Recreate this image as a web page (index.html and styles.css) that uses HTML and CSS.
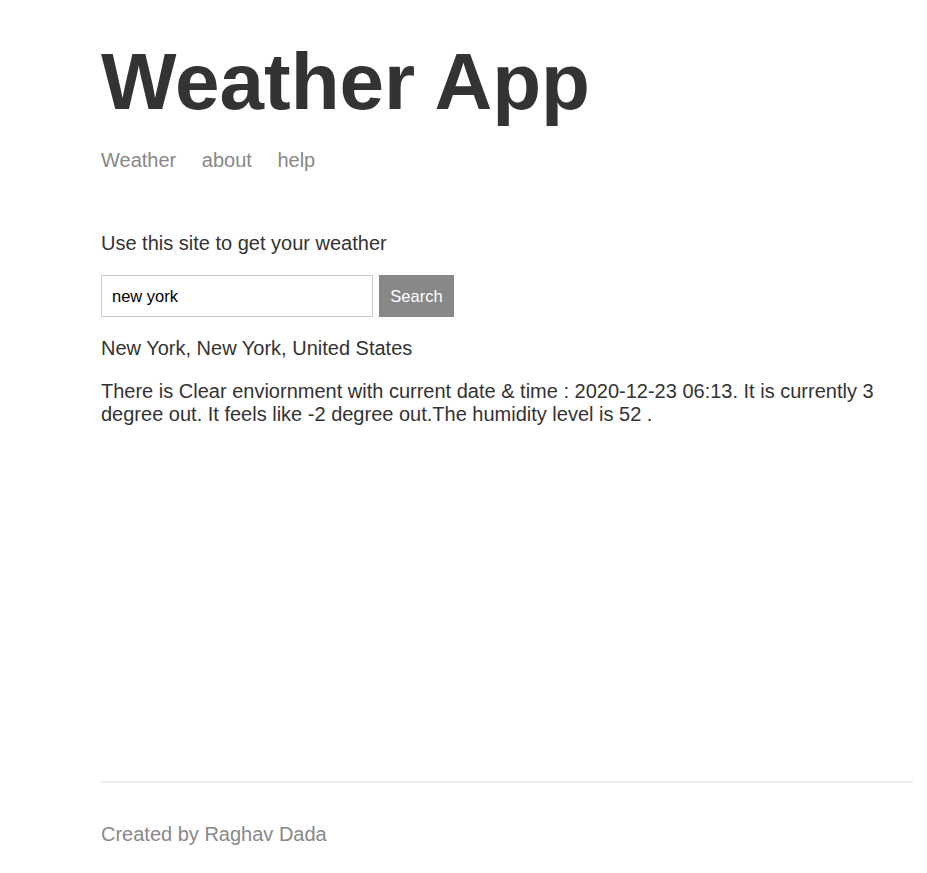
FILE: index.html
```html
<!DOCTYPE html>
<html lang="en">
<head>
<meta charset="utf-8">
<title>Weather</title>
<link rel="stylesheet" href="styles.css">
</head>
<body>
<div class="page">
  <div class="main-content">
    <header class="header">
      <h1 class="title">Weather App</h1>
      <nav class="nav">
        <a class="nav-link" href="#">Weather</a>
        <a class="nav-link" href="#">about</a>
        <a class="nav-link" href="#">help</a>
      </nav>
    </header>
    <p class="text">Use this site to get your weather</p>
    <form class="search-form">
      <input class="search-input" type="text" value="new york">
      <button class="search-button" type="button">Search</button>
    </form>
    <p class="text">New York, New York, United States</p>
    <p class="text">There is Clear enviornment with current date &amp; time : 2020-12-23 06:13. It is currently 3 degree out. It feels like -2 degree out.The humidity level is 52 .</p>
  </div>
  <footer class="footer">
    <p class="footer-text">Created by Raghav Dada</p>
  </footer>
</div>
</body>
</html>
```

FILE: styles.css
```css
html, body {
  margin: 0;
  padding: 0;
  background: #fff;
}

.page {
  font-family: "Liberation Sans", Arial, sans-serif;
  color: #333;
  width: 913px;
  padding-left: 101px;
  min-height: 100vh;
  display: flex;
  flex-direction: column;
  box-sizing: border-box;
}

.main-content {
  flex-grow: 1;
}

.header {
  margin-bottom: 60px;
}

.title {
  font-size: 80px;
  font-weight: bold;
  line-height: 92px;
  margin: 36px 0 0;
}

.nav {
  margin-top: 21px;
  font-size: 20px;
  line-height: 23px;
}

.nav-link {
  color: #888;
  text-decoration: none;
  margin-right: 20px;
}

.text {
  font-size: 20px;
  line-height: 23px;
  margin: 0 0 20px;
}

.search-form {
  display: flex;
  gap: 6px;
  margin: 0 0 20px;
}

.search-input {
  box-sizing: border-box;
  width: 272px;
  height: 42px;
  border: 1px solid #ccc;
  padding: 0 10px;
  font-family: "Liberation Sans", Arial, sans-serif;
  font-size: 16.5px;
  color: #000;
  outline: none;
  margin: 0;
}

.search-button {
  box-sizing: border-box;
  width: 75px;
  height: 42px;
  border: 1px solid #888;
  background: #888;
  color: #fff;
  font-family: "Liberation Sans", Arial, sans-serif;
  font-size: 16.5px;
  padding: 0;
  margin: 0;
}

.footer {
  border-top: 2px solid #eee;
  padding: 40px 0 27px;
  color: #888;
}

.footer-text {
  font-size: 20px;
  line-height: 23px;
  margin: 0;
}
```
